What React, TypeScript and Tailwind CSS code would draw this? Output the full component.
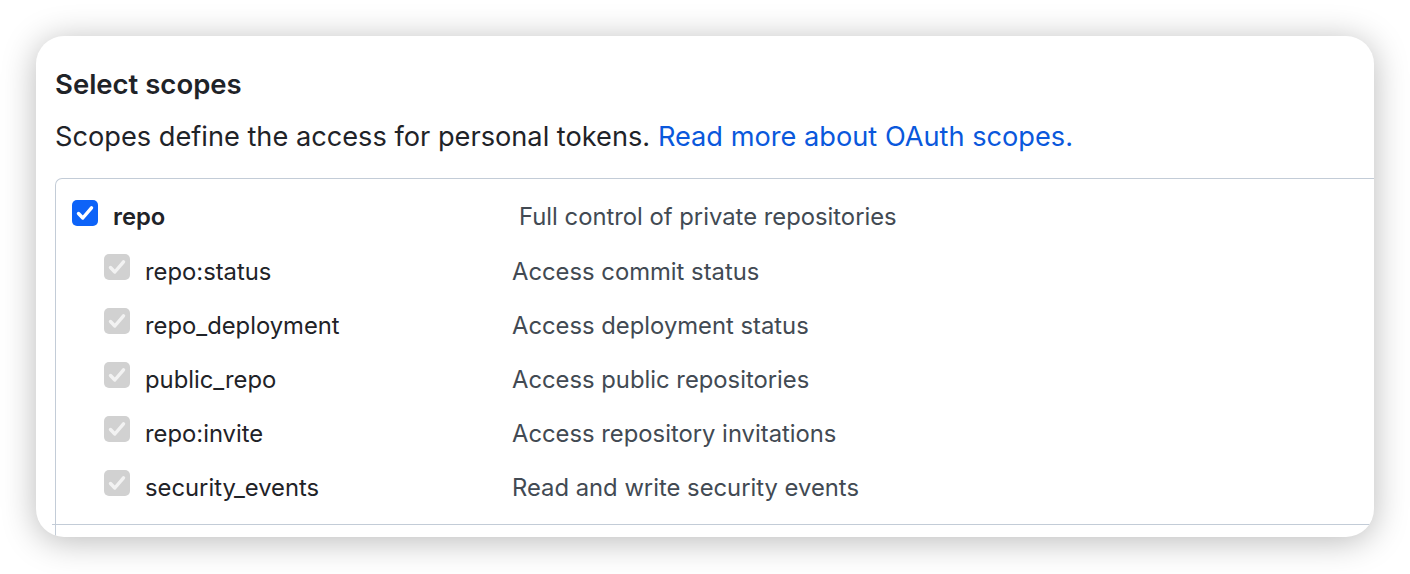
import React from 'react';

type Scope = { name: string; desc: string };

const subScopes: Scope[] = [
  { name: 'repo:status', desc: 'Access commit status' },
  { name: 'repo_deployment', desc: 'Access deployment status' },
  { name: 'public_repo', desc: 'Access public repositories' },
  { name: 'repo:invite', desc: 'Access repository invitations' },
  { name: 'security_events', desc: 'Read and write security events' },
];

const Check = ({ color }: { color: string }) => (
  <svg width="26" height="26" viewBox="0 0 26 26" fill="none">
    <path
      d="M6.5 13.5 L10.8 18 L19.5 7.8"
      stroke={color}
      strokeWidth="3.4"
      strokeLinecap="round"
      strokeLinejoin="round"
    />
  </svg>
);

const Box = ({ disabled }: { disabled?: boolean }) => (
  <div
    className={
      disabled
        ? 'w-[26px] h-[26px] shrink-0 rounded-[5px] bg-[#d1d1d1] flex items-center justify-center'
        : 'w-[26px] h-[26px] shrink-0 rounded-[5px] bg-[#0d63f8] flex items-center justify-center'
    }
  >
    <Check color={disabled ? '#f2f2f2' : '#ffffff'} />
  </div>
);

export default function App() {
  return (
    <div
      className="w-[1410px] h-[574px] bg-white pt-[36px] pl-[36px]"
      style={{ fontFamily: 'Inter, "Noto Sans", sans-serif' }}
    >
      <div className="w-[1338px] h-[501px] rounded-[28px] bg-white overflow-hidden shadow-[0_4px_34px_rgba(0,0,0,0.28)] pt-[32px]">
        {/* Header */}
        <div className="pl-[19px]">
          <h2 className="text-[27.5px] leading-[32px] font-semibold text-[#1f2328]">Select scopes</h2>
          <p className="mt-[21px] text-[27.2px] leading-[32px] text-[#1f2328]">
            Scopes define the access for personal tokens.{' '}
            <a className="text-[#0a58dc]">Read more about OAuth scopes.</a>
          </p>
        </div>

        {/* Scope list */}
        <div className="mt-[25px] ml-[16px] w-[1400px]">
          <div className="ml-[3px] border-l border-t border-[#c3ccd7] rounded-tl-[7px] pt-[7px] pb-[14px]">
            <div className="h-[54px] flex items-center pl-[16px] text-[23.8px]">
              <Box />
              <span className="mt-[8px] ml-[15px] w-[406px] font-semibold text-[#1f2328]">repo</span>
              <span className="mt-[8px] text-[#424a53]">Full control of private repositories</span>
            </div>
            {subScopes.map((s) => (
              <div key={s.name} className="h-[54px] flex items-center pl-[48px] text-[23.8px]">
                <Box disabled />
                <span className="mt-[9px] ml-[15px] w-[367px] text-[#1f2328]">{s.name}</span>
                <span className="mt-[9px] text-[#424a53]">{s.desc}</span>
              </div>
            ))}
          </div>
          <div className="h-px bg-[#c3ccd7]" />
          <div className="ml-[3px] h-[20px] border-l border-[#c3ccd7]" />
        </div>
      </div>
    </div>
  );
}
